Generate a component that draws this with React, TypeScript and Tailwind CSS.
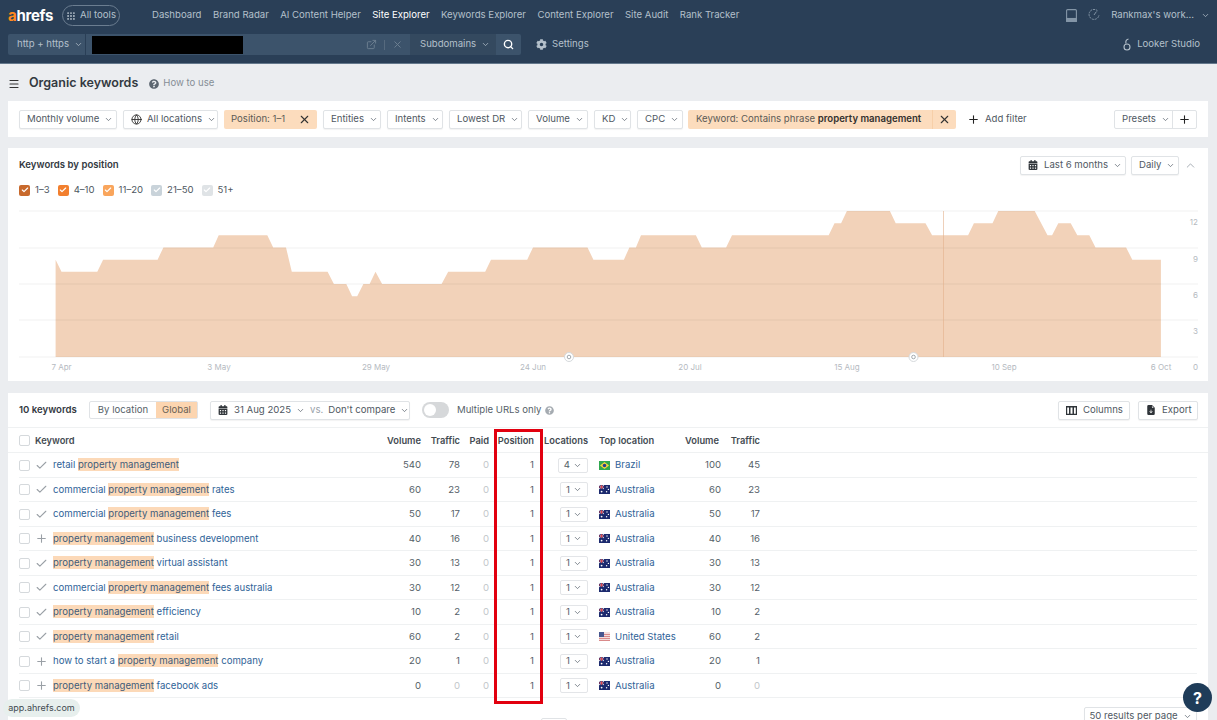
import { Check, ChevronDown, ChevronUp, ExternalLink, Globe, Grip, Menu, Plus, Search, X } from "lucide-react";
import { BsFileEarmarkArrowDownFill } from "react-icons/bs";
import { FaCalendarAlt, FaCog, FaQuestionCircle } from "react-icons/fa";

const navItems = ["Dashboard", "Brand Radar", "AI Content Helper", "Site Explorer", "Keywords Explorer", "Content Explorer", "Site Audit", "Rank Tracker"];

// [page x, keywords] read off the chart
const chartPoints = [
  [55.6, 8], [61.5, 7], [97.3, 7], [103.1, 8], [157.6, 8], [163.4, 9], [213.2, 9], [218.7, 10], [267.3, 10], [273.2, 9],
  [286, 9], [291.8, 7], [327.6, 7], [333.9, 6], [346.3, 6], [352.1, 5], [357.2, 5], [363.4, 6], [369.6, 6], [375.5, 7],
  [382.1, 6], [441.6, 6], [448.2, 7], [485.2, 7], [491, 8], [527.2, 8], [533, 9], [587.5, 9], [593.4, 8], [623.9, 8],
  [629.4, 9], [635.9, 9], [641, 10], [695.9, 10], [701.8, 9], [726.1, 9], [732, 10], [828.7, 10], [834.5, 11], [841.1, 11],
  [846.9, 12], [889.9, 12], [895.7, 11], [925.5, 11], [932.1, 10], [968.1, 10], [973.9, 11], [992.5, 11], [998.3, 12],
  [1034.7, 12], [1047.5, 10], [1052.1, 10], [1058.3, 11], [1070.7, 11], [1077.3, 10], [1089.3, 10], [1095.5, 9], [1126.1, 9],
  [1132.3, 8], [1160.9, 8],
];

const areaPath =
  "M55.6 357 " + chartPoints.map(([x, v]) => `L${x} ${357 - v * 12.17}`).join(" ") + " L1160.9 357 Z";

const xLabels: [string, number][] = [["7 Apr", 61.5], ["3 May", 219], ["29 May", 376], ["24 Jun", 533], ["20 Jul", 690], ["15 Aug", 847], ["10 Sep", 1004], ["6 Oct", 1161]];
const yLabels: [string, number][] = [["12", 225], ["9", 262], ["6", 298], ["3", 334], ["0", 370]];

const legend = [
  { label: "1–3", color: "bg-[#c8692c]" },
  { label: "4–10", color: "bg-[#f27f2e]" },
  { label: "11–20", color: "bg-[#f9a55c]" },
  { label: "21–50", color: "bg-[#c9d3da]" },
  { label: "51+", color: "bg-[#dfe3e6]" },
];

type Flag = "br" | "au" | "us";

const rows: { pre?: string; post?: string; added?: boolean; vol: number; traffic: number; loc: number; flag: Flag; place: string; vol2: number; traffic2: number }[] = [
  { pre: "retail", vol: 540, traffic: 78, loc: 4, flag: "br", place: "Brazil", vol2: 100, traffic2: 45 },
  { pre: "commercial", post: "rates", vol: 60, traffic: 23, loc: 1, flag: "au", place: "Australia", vol2: 60, traffic2: 23 },
  { pre: "commercial", post: "fees", vol: 50, traffic: 17, loc: 1, flag: "au", place: "Australia", vol2: 50, traffic2: 17 },
  { post: "business development", added: true, vol: 40, traffic: 16, loc: 1, flag: "au", place: "Australia", vol2: 40, traffic2: 16 },
  { post: "virtual assistant", vol: 30, traffic: 13, loc: 1, flag: "au", place: "Australia", vol2: 30, traffic2: 13 },
  { pre: "commercial", post: "fees australia", vol: 30, traffic: 12, loc: 1, flag: "au", place: "Australia", vol2: 30, traffic2: 12 },
  { post: "efficiency", vol: 10, traffic: 2, loc: 1, flag: "au", place: "Australia", vol2: 10, traffic2: 2 },
  { post: "retail", vol: 60, traffic: 2, loc: 1, flag: "us", place: "United States", vol2: 60, traffic2: 2 },
  { pre: "how to start a", post: "company", added: true, vol: 20, traffic: 1, loc: 1, flag: "au", place: "Australia", vol2: 20, traffic2: 1 },
  { post: "facebook ads", added: true, vol: 0, traffic: 0, loc: 1, flag: "au", place: "Australia", vol2: 0, traffic2: 0 },
];

const gridCols = "grid grid-cols-[16px_18px_328px_40px_39px_29px_45px_54px_92px_41px_39px] items-center";

const Chevron = () => <ChevronDown size={9} strokeWidth={2} className="shrink-0 text-[#5c6670]" />;

const Btn = ({ children, className = "" }: { children: React.ReactNode; className?: string }) => (
  <div className={`flex h-[19px] items-center gap-[5px] whitespace-nowrap rounded-[2px] border border-[#e0e3e6] bg-white px-[7px] text-[#4f5862] shadow-[0_1px_1px_rgba(0,0,0,0.05)] ${className}`}>
    {children}
  </div>
);

const FlagIcon = ({ flag }: { flag: Flag }) => {
  if (flag === "br")
    return (
      <svg width="11" height="9" viewBox="0 0 11 9" className="shrink-0">
        <rect width="11" height="9" fill="#2fa84f" />
        <path d="M5.5 1 10 4.5 5.5 8 1 4.5Z" fill="#f5d63d" />
        <circle cx="5.5" cy="4.5" r="1.8" fill="#24408e" />
      </svg>
    );
  if (flag === "us")
    return (
      <svg width="11" height="9" viewBox="0 0 11 9" className="shrink-0">
        <rect width="11" height="9" fill="#f4dcdc" />
        <rect y="2" width="11" height="1" fill="#d98a8a" />
        <rect y="4" width="11" height="1" fill="#d98a8a" />
        <rect y="6" width="11" height="1" fill="#d98a8a" />
        <rect y="8" width="11" height="1" fill="#d98a8a" />
        <rect width="5" height="5" fill="#46568f" />
      </svg>
    );
  return (
    <svg width="11" height="9" viewBox="0 0 11 9" className="shrink-0">
      <rect width="11" height="9" fill="#1c2a6e" />
      <path d="M0 0 5 4M5 0 0 4" stroke="#e8e8f0" strokeWidth="0.9" />
      <path d="M2.5 0V4M0 2H5" stroke="#d8404a" strokeWidth="0.9" />
      <circle cx="8" cy="2" r="0.7" fill="#fff" />
      <circle cx="9.4" cy="4.4" r="0.7" fill="#fff" />
      <circle cx="7.6" cy="6.8" r="0.7" fill="#fff" />
      <circle cx="2.6" cy="6.6" r="0.9" fill="#fff" />
    </svg>
  );
};

const Header = () => (
  <div className="h-[64px] whitespace-nowrap border-b border-[#64788c] bg-[#2a3f57] text-[9.6px] text-[#b4c0cb]">
    <div className="flex h-[31px] items-center pl-2 pr-[7px]">
      <div className="w-[43px] text-[15px] font-bold leading-none tracking-[-0.3px] text-white">
        <span className="text-[#ff8a1f]">a</span>hrefs
      </div>
      <div className="ml-[11px] flex h-[21px] w-[58px] items-center justify-center gap-[4px] rounded-full border border-[#6b7d90]">
        <Grip size={10} strokeWidth={2.5} className="shrink-0" />
        <span>All tools</span>
      </div>
      <div className="ml-[32px] flex gap-[11.4px]">
        {navItems.map((item) => (
          <span key={item} className={item === "Site Explorer" ? "text-white" : ""}>
            {item}
          </span>
        ))}
      </div>
      <div className="ml-auto flex items-center">
        <svg width="11" height="13" viewBox="0 0 11 13" fill="none" stroke="#8496a7" strokeWidth="1.1">
          <rect x="0.6" y="0.6" width="9.8" height="11.8" rx="1" />
          <rect x="0.6" y="9.5" width="9.8" height="2.9" fill="#8496a7" />
        </svg>
        <svg width="12" height="12" viewBox="0 0 12 12" fill="none" stroke="#8496a7" strokeWidth="1" className="ml-[11px]">
          <path d="M9.5 1.8A5 5 0 1 0 11 6" strokeDasharray="2 0.8" />
          <path d="M6 6 8.4 2.6" />
        </svg>
        <span className="ml-[11px]">Rankmax's work...</span>
        <ChevronDown size={9} strokeWidth={2} className="ml-[7px]" />
      </div>
    </div>
    <div className="mt-[3px] flex h-[21px] items-center pl-2 pr-[17px]">
      <div className="flex h-full w-[77px] items-center gap-[5px] rounded-l-[2px] bg-[#3c536b] pl-[9px]">
        http + https <ChevronDown size={9} strokeWidth={2} className="shrink-0" />
      </div>
      <div className="ml-px flex h-full w-[324px] items-center bg-[#3c536b] pl-[6px]">
        <div className="h-[18px] w-[151px] bg-black" />
        <ExternalLink size={11} className="ml-auto text-[#6f8193]" />
        <div className="mx-[7px] h-[10px] w-px bg-[#566a7e]" />
        <X size={11} className="mr-[7px] text-[#6f8193]" />
      </div>
      <div className="flex h-full w-[86px] items-center gap-[5px] bg-[#34495f] pl-[10px]">
        Subdomains <ChevronDown size={9} strokeWidth={2} className="shrink-0" />
      </div>
      <div className="flex h-full w-[25px] items-center justify-center rounded-r-[2px] bg-[#3c536b] text-white">
        <Search size={11} strokeWidth={3} />
      </div>
      <FaCog size={11} className="ml-[15px]" />
      <span className="ml-[5px]">Settings</span>
      <div className="ml-auto flex items-center gap-[6px]">
        <svg width="8" height="13" viewBox="0 0 8 13" fill="none" stroke="#b4c0cb" strokeWidth="1.1">
          <circle cx="4" cy="9" r="3" />
          <path d="M3 5.5C2.5 3.5 3.5 1.5 5.5 1" />
        </svg>
        <span>Looker Studio</span>
      </div>
    </div>
  </div>
);

const Filters = () => (
  <div className="mx-2 flex h-[36px] w-[1200px] items-center bg-white px-[11px] text-[9.6px]">
    <div className="flex gap-[6px]">
      <Btn className="w-[98px]">Monthly volume <Chevron /></Btn>
      <Btn className="w-[95px]"><Globe size={11} className="shrink-0 text-[#333]" />All locations <Chevron /></Btn>
      <div className="flex h-[19px] w-[93px] items-center justify-between rounded-[2px] bg-[#fcdcbd] pl-[7px] pr-[6px] text-[#5b5a55]">
        Position: 1–1 <X size={13} strokeWidth={2} className="text-[#333]" />
      </div>
      <Btn className="w-[58px]">Entities <Chevron /></Btn>
      <Btn className="w-[56px]">Intents <Chevron /></Btn>
      <Btn className="w-[73px]">Lowest DR <Chevron /></Btn>
      <Btn className="w-[60px]">Volume <Chevron /></Btn>
      <Btn className="w-[37px]">KD <Chevron /></Btn>
      <Btn className="w-[46px]">CPC <Chevron /></Btn>
    </div>
    <div className="ml-[5px] flex h-[19px] w-[268px] items-center rounded-[2px] bg-[#fcdcbd] pl-[8px] text-[#5b5a55]">
      <span className="whitespace-nowrap">
        Keyword: Contains phrase <b className="font-semibold text-[#33312e]">property management</b>
      </span>
      <div className="ml-auto flex h-full w-[24px] items-center justify-center border-l border-[#f7cfa8]">
        <X size={13} strokeWidth={2} className="text-[#333]" />
      </div>
    </div>
    <Plus size={13} strokeWidth={2} className="ml-[11px] text-[#222]" />
    <span className="ml-[5px] text-[#4f5862]">Add filter</span>
    <div className="ml-auto flex h-[19px] w-[83px] rounded-[2px] border border-[#e0e3e6] text-[#4f5862]">
      <div className="flex flex-1 items-center gap-[5px] border-r border-[#e0e3e6] pl-[7px]">
        Presets <Chevron />
      </div>
      <div className="flex w-[23px] items-center justify-center">
        <Plus size={13} strokeWidth={2} className="text-[#222]" />
      </div>
    </div>
  </div>
);

const ChartCard = () => (
  <div className="mx-2 mt-[11px] h-[233px] w-[1200px] bg-white px-[11px] pt-2 text-[9.6px] text-[#4f5862]">
    <div className="flex h-[18px] items-center">
      <span className="pt-px font-semibold text-[#33393f]">Keywords by position</span>
      <Btn className="ml-auto h-[18px] w-[106px]"><FaCalendarAlt size={10} className="mr-[1px] shrink-0 text-[#2f3439]" />Last 6 months <Chevron /></Btn>
      <Btn className="ml-[5px] h-[18px] w-[48px]">Daily <Chevron /></Btn>
      <ChevronUp size={13} strokeWidth={1.6} className="ml-[5px] text-[#9aa2aa]" />
    </div>
    <div className="mt-[7px] flex h-[18px] items-center gap-[8px] pt-px">
      {legend.map((l) => (
        <div key={l.label} className="flex items-center gap-[5px]">
          <span className={`flex h-[11px] w-[11px] items-center justify-center rounded-[2px] ${l.color}`}>
            <Check size={8} strokeWidth={3.5} className="text-white" />
          </span>
          {l.label}
        </div>
      ))}
    </div>
    <svg viewBox="19 200 1190 178" className="mt-px block h-[178px] w-[1190px]">
      <path d={areaPath} fill="#f2d2b9" />
      {[211, 248, 284, 320, 357].map((y) => (
        <line key={y} x1="19" x2="1198" y1={y} y2={y} stroke="#000" strokeOpacity="0.06" />
      ))}
      <line x1="943.5" x2="943.5" y1="211" y2="357" stroke="#e3b08c" strokeOpacity="0.6" />
      {[569, 913.5].map((x) => (
        <g key={x}>
          <circle cx={x} cy="357" r="4.5" fill="#fff" stroke="#d5d9dc" />
          <circle cx={x} cy="357" r="1.8" fill="none" stroke="#8d959c" strokeWidth="0.8" />
        </g>
      ))}
      {xLabels.map(([t, x]) => (
        <text key={t} x={x} y="370" textAnchor="middle" fontSize="8" fill="#b5babf">{t}</text>
      ))}
      {yLabels.map(([t, y]) => (
        <text key={t} x="1198" y={y} textAnchor="end" fontSize="8" fill="#b5babf">{t}</text>
      ))}
    </svg>
  </div>
);

const TableCard = () => (
  <div className="mx-2 mt-[12px] h-[340px] w-[1200px] bg-white text-[9.6px] text-[#565f69]">
    <div className="flex h-[35px] items-center border-b border-[#eff1f2] pl-[11px] pr-[10px]">
      <span className="w-[70px] pt-px font-semibold text-[#33393f]">10 keywords</span>
      <div className="flex h-[18px] w-[109px] rounded-[2px] border border-[#e0e3e6]">
        <div className="flex w-[66px] items-center justify-center">By location</div>
        <div className="flex flex-1 items-center justify-center bg-[#fcd5b0] text-[#6b6255]">Global</div>
      </div>
      <Btn className="ml-3 h-[18px] w-[200px]">
        <FaCalendarAlt size={10} className="mr-[1px] shrink-0 text-[#2f3439]" />31 Aug 2025 <Chevron />
        <span className="text-[#9aa2aa]">vs.</span> Don't compare <Chevron />
      </Btn>
      <div className="ml-3 flex h-4 w-[27px] items-center rounded-full bg-[#d6d8da] pl-[2px]">
        <div className="h-3 w-3 rounded-full bg-white" />
      </div>
      <span className="ml-2 pt-px">Multiple URLs only</span>
      <FaQuestionCircle size={9} className="ml-[4px] text-[#a5abb1]" />
      <Btn className="ml-auto h-[18px] w-[72px]">
        <svg width="11" height="9" viewBox="0 0 11 9" className="mr-[1px] shrink-0">
          <path d="M0 0H11V9H0ZM1.2 1.5V7.8H3V1.5ZM4.5 1.5V7.8H6.5V1.5ZM8 1.5V7.8H9.8V1.5Z" fill="#2f3439" fillRule="evenodd" />
        </svg>
        Columns
      </Btn>
      <Btn className="ml-2 h-[18px] w-[60px]"><BsFileEarmarkArrowDownFill size={10} className="mr-[1px] shrink-0 text-[#2f3439]" />Export</Btn>
    </div>
    <div className="border-b border-[#eff1f2] px-[11px]">
      <div className={`${gridCols} h-[24px] pt-px text-[9.3px] font-semibold text-[#444b52]`}>
        <span className="h-[11px] w-[11px] rounded-[2px] border border-[#d5d9dc]" />
        <span className="col-span-2">Keyword</span>
        <span className="text-right">Volume</span>
        <span className="text-right">Traffic</span>
        <span className="text-right">Paid</span>
        <span className="text-right">Position</span>
        <span className="text-right">Locations</span>
        <span className="pl-[11px]">Top location</span>
        <span className="pr-[2px] text-right">Volume</span>
        <span className="text-right">Traffic</span>
      </div>
    </div>
    <div className="mx-[11px]">
      {rows.map((r, i) => (
        <div key={i} className={`${gridCols} h-[24.5px] border-b border-[#eff1f2] pt-px`}>
          <span className="h-[11px] w-[11px] rounded-[2px] border border-[#d5d9dc]" />
          {r.added ? <Plus size={13} className="text-[#9aa0a6]" /> : <Check size={13} className="text-[#9aa0a6]" />}
          <div className="whitespace-nowrap text-[#2f6398]">
            {r.pre && <span>{r.pre} </span>}
            <span className="bg-[#fcd9b8] py-px text-[#425c79]">property management</span>
            {r.post && <span> {r.post}</span>}
          </div>
          <span className="text-right">{r.vol}</span>
          <span className={`text-right ${r.traffic === 0 ? "text-[#c3c7cb]" : ""}`}>{r.traffic}</span>
          <span className="text-right text-[#c3c7cb]">0</span>
          <span className="text-right">1</span>
          <div className="flex justify-end">
            <div className="flex h-[15px] items-center gap-[3px] rounded-[2px] border border-[#e3e5e8] px-[5px]">
              {r.loc} <Chevron />
            </div>
          </div>
          <div className="flex items-center gap-[5px] whitespace-nowrap pl-[11px] text-[#2f6398]">
            <FlagIcon flag={r.flag} />
            {r.place}
          </div>
          <span className="text-right">{r.vol2}</span>
          <span className={`text-right ${r.traffic2 === 0 ? "text-[#c3c7cb]" : ""}`}>{r.traffic2}</span>
        </div>
      ))}
    </div>
    <div className="relative mt-[9px] flex justify-end px-[11px]">
      <div className="absolute left-[533px] top-[11px] h-[10px] w-[26px] rounded-[2px] border border-[#e0e3e6]" />
      <Btn className="w-[113px] justify-center">50 results per page <Chevron /></Btn>
    </div>
  </div>
);

export default function App() {
  return (
    <div className="relative h-[720px] w-[1217px] overflow-hidden bg-[#ebedf0] font-['Inter',sans-serif]">
      <Header />
      <div className="flex h-[37px] items-center pl-2 pt-[2px]">
        <Menu size={12} strokeWidth={2.2} className="text-[#333]" />
        <span className="ml-[9px] text-[12.5px] font-semibold text-[#333a41]">Organic keywords</span>
        <FaQuestionCircle size={10} className="ml-[11px] text-[#5c6670]" />
        <span className="ml-[4px] text-[9.6px] text-[#868e96]">How to use</span>
      </div>
      <Filters />
      <ChartCard />
      <TableCard />
      <div className="absolute left-[494px] top-[429px] h-[275px] w-[49px] border-[3px] border-[#e2000f]" />
      <div className="absolute left-[3px] top-[699px] flex h-[18px] w-[77px] items-center justify-center rounded-full bg-[#e7efed] text-[9px] text-[#3f4a50]">
        app.ahrefs.com
      </div>
      <div className="absolute left-[1183px] top-[683px] flex h-[29px] w-[29px] items-center justify-center rounded-full bg-[#1f3c59] text-[16px] font-bold text-white">
        ?
      </div>
    </div>
  );
}
